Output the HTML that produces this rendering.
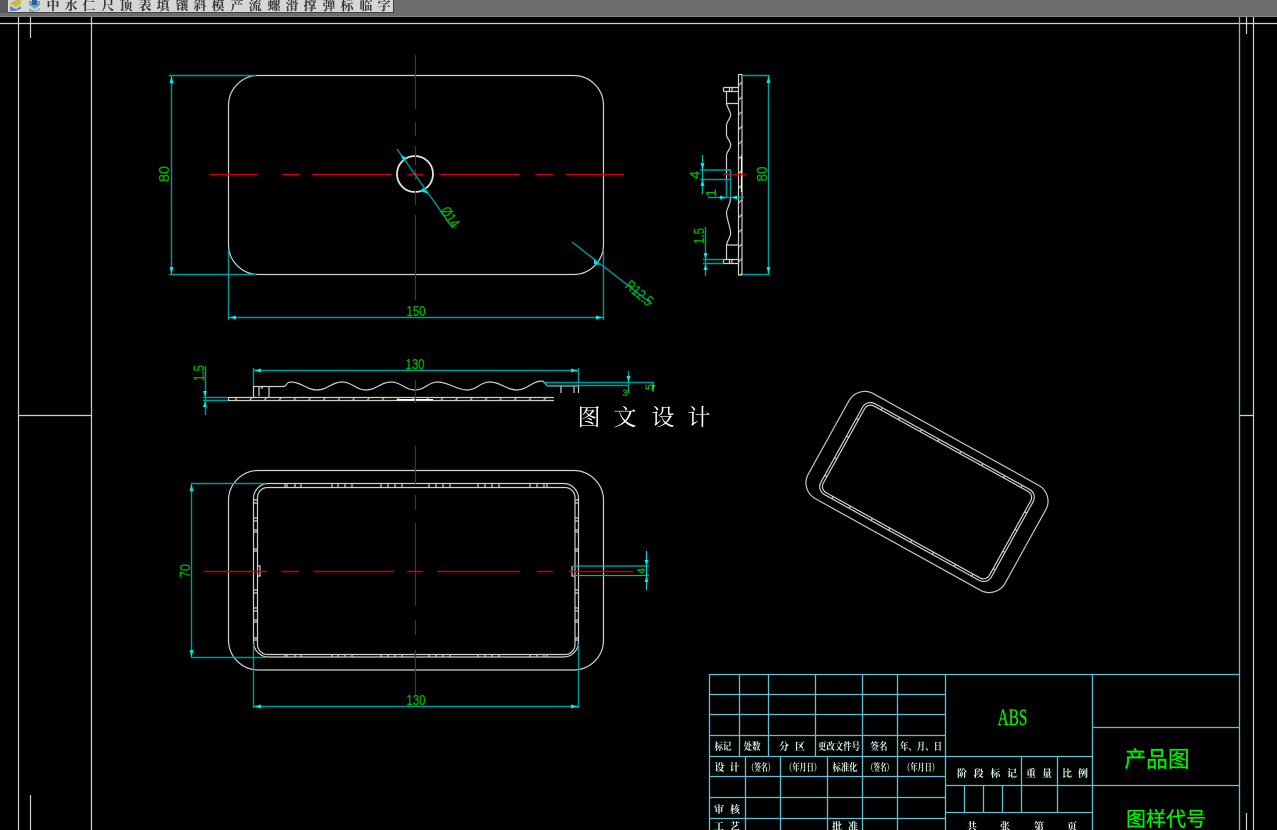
<!DOCTYPE html>
<html><head><meta charset="utf-8"><style>
html,body{margin:0;padding:0;background:#000;width:1277px;height:830px;overflow:hidden}
svg{display:block;position:absolute;left:0;top:0;filter:blur(.35px)}
.w{fill:none;stroke:#d0d0d0;stroke-width:1.2}
.d{fill:none;stroke:#009a9a;stroke-width:1.4}
.c{fill:none;stroke:#62c0d4;stroke-width:1.3}
.r{fill:none;stroke:#c80000;stroke-width:1.4}
.g{fill:#00b000;stroke:#00b000;stroke-width:.3;font-family:"Liberation Sans",sans-serif;font-size:15px;text-anchor:middle}
.t{fill:#d8f5ee;font-family:"Liberation Serif","Noto Serif CJK SC",serif;font-size:10px;font-weight:700;text-anchor:middle}
.b{fill:#00f000;stroke:#00f000;stroke-width:.3;font-family:"Liberation Sans","WenQuanYi Zen Hei",sans-serif;text-anchor:middle}
.tb{fill:#333;font-family:"Liberation Serif","Noto Serif CJK SC",serif;font-size:13px;font-weight:700;text-anchor:middle}
.a{fill:#00e8e8}
</style></head><body>
<svg width="1277" height="830" viewBox="0 0 1277 830" xmlns="http://www.w3.org/2000/svg">
<defs>
<pattern id="hh" patternUnits="userSpaceOnUse" width="14.7" height="3.4" x="233" y="396.8"><path d="M2 3.400L5 0" stroke="#d8d830" stroke-width="1.2"/></pattern>
<pattern id="hv" patternUnits="userSpaceOnUse" width="3.4" height="14.7" x="738.6" y="80"><path d="M0 5.500L3.400 2" stroke="#d8d830" stroke-width="1.2"/></pattern>
</defs>
<rect width="1277" height="830" fill="#000"/>
<!-- top bar -->
<rect x="0" y="0" width="1277" height="16" fill="#6e6e6e"/>
<rect x="0" y="16" width="1277" height="1" fill="#8a8a8a"/>
<rect x="0" y="0" width="8" height="13" fill="#5a5a5a"/>
<rect x="8" y="0" width="385" height="12" fill="#d6d6d2"/>
<rect x="393" y="0" width="1" height="13" fill="#3c3c3c"/>
<rect x="8" y="12" width="386" height="1" fill="#444"/>
<path d="M10 3L16 0H21V4L16 7L10 4Z" fill="#c9b84a"/><path d="M10 6L16 9L21 6V9L15 11H10Z" fill="#5b8fc4"/>
<path d="M29 1H40V5L35 9L29 5Z" fill="#6f9fc8"/><path d="M32 0H37V5H32Z" fill="#2a5f9a"/><path d="M29 8L35 11L40 8V10L35 12H29Z" fill="#8fa9bd"/>
<g class="tb">
<text x="53" y="10">中</text><text x="71" y="10">水</text><text x="89" y="10">仁</text><text x="108" y="10">尺</text><text x="126" y="10">顶</text><text x="145" y="10">表</text><text x="163" y="10">填</text><text x="182" y="10">镶</text><text x="200" y="10">斜</text><text x="218" y="10">模</text><text x="237" y="10">产</text><text x="255" y="10">流</text><text x="274" y="10">螺</text><text x="292" y="10">滑</text><text x="310" y="10">撑</text><text x="329" y="10">弹</text><text x="347" y="10">标</text><text x="366" y="10">临</text><text x="384" y="10">字</text>
</g>
<!-- drawing frame -->
<g class="w">
<path d="M0 23.500H1277"/>
<path d="M18.500 17V830M91.500 17V830M18.500 415.500H91.500"/>
<path d="M30.500 17V38"/>
<path d="M1253.500 17V830M1239.500 415.500H1253.500"/>
<path d="M1246.500 17V34M1246.500 813V830"/>
<path d="M30.500 795V830"/>
</g>
<path class="c" d="M1239.500 17V830"/>

<!-- top view -->
<rect class="w" x="228.500" y="75.500" width="375" height="199" rx="30" ry="30"/>
<circle class="w" cx="415" cy="174" r="18" style="stroke-width:1.800;stroke:#e4e4e4"/>
<path class="r" d="M209 174.500H258M282 174.500H300M312 174.500H392M407 174.500H423M439 174.500H520M535 174.500H553M566 174.500H624"/>
<path class="r" d="M415.500 55V109M415.500 122V136M415.500 146V165M415.500 169V180M415.500 190V205M415.500 215V300" style="stroke-width:1.100"/>
<path class="d" d="M169 75.500H256M169 274.500H256M171.500 75V275"/>
<path class="a" d="M171.500 76l-2 7h4zM171.500 274l-2 -7h4z"/>
<text class="g" transform="translate(169,174) rotate(-90)" textLength="16" lengthAdjust="spacingAndGlyphs">80</text>
<path class="d" d="M228.500 250V320M603.500 250V320M228 317.500H604"/>
<path class="a" d="M229 317.500l7 -2v4zM603 317.500l-7 -2v4z"/>
<text class="g" x="416" y="316" textLength="19" lengthAdjust="spacingAndGlyphs">150</text>
<path class="d" d="M397 149L452 227"/>
<path class="a" d="M401 155l2 6 4 -3zM429 194l-6 -6 -3 3 z"/>
<text class="g" transform="translate(446,220) rotate(55)" style="font-size:15px" textLength="22" lengthAdjust="spacingAndGlyphs">Ø14</text>
<path class="d" d="M572 242L652 304"/>
<path class="a" d="M594 259l6 6 -6 -1z"/>
<text class="g" transform="translate(636,297) rotate(40)" style="font-size:15px" textLength="31" lengthAdjust="spacingAndGlyphs">R12.5</text>

<!-- side view -->
<g>
<rect x="738.500" y="74.500" width="3.500" height="200.500" class="w"/>
<rect x="739" y="75" width="3" height="200" fill="url(#hv)"/>
<path d="M741.500 157V192" stroke="#fff" stroke-width="1.200"/>
<path class="w" d="M723.500 87.500H738M723.500 91.500H738M723.500 87.500V91.500M729.500 87.500V91.500M732 87.500V91.500"/>
<path class="w" d="M726.500 92V103.500H738M726.500 103.500C727 107 730.700 112 730.700 115C730.700 118 726.500 122 726.500 125V135C727 139 730.700 141 730.700 145C730.700 149 726.500 152 726.500 155V170H730.500V179M726.500 170V198M730.500 198C730.500 205 726.500 208 726.500 213C726.500 218 730.700 229 730.700 233C730.700 237 727 241 726.500 245V259M726.500 245H738"/>
<path class="w" d="M723.500 259.500H738M723.500 263.500H738M723.500 259.500V263.500M729.500 259.500V263.500M732 259.500V263.500"/>
<path d="M723 174.500H746" stroke="#c80000" stroke-width="1.400"/>
<path class="d" d="M742 75.500H770M742 274.500H770M768.500 76V275"/>
<path class="a" d="M768.500 76l-2 7h4zM768.500 274l-2 -7h4z"/>
<text class="g" transform="translate(767,174) rotate(-90)" textLength="15" lengthAdjust="spacingAndGlyphs">80</text>
<path class="d" d="M700 170H731M700 179.500H731M730.500 170V198M726.500 179V198M708 197.500H744"/>
<path d="M702.500 155V194" stroke="#00b8b8" stroke-width="1.200" fill="none"/>
<path class="a" d="M702.500 170l-2 -7h4zM702.500 179l-2 7h4zM726 197.500l-6 -2v4zM731 197.500l6 -2v4z"/>
<text class="g" transform="translate(700,175) rotate(-90)">4</text>
<text class="g" transform="translate(716,193) rotate(-90)">1</text>
<path class="d" d="M705.500 227V276M703 259.500H723M703 263.500H723"/>
<path class="a" d="M705.500 259l-2 -6h4zM705.500 264l-2 6h4z"/>
<text class="g" transform="translate(704,236) rotate(-90)" textLength="16" lengthAdjust="spacingAndGlyphs">1.5</text>
</g>

<!-- section view -->
<g>
<path class="w" d="M228 397.500H554M228 400.500H554M228.500 397V400"/>
<rect x="233" y="397" width="321" height="3.400" fill="url(#hh)"/>
<path d="M397 399.800H433" stroke="#fff" stroke-width="1.500"/>
<path class="w" d="M253.500 386V397M269 386V397M253 386.500H284C287 386 286 382 291 382C301 382 307 390 317 390C327 390 332 382 342 382C352 382 356 390 366 390C376 390 381 382 391 382C401 382 405 390 415 390C425 390 428 382 438 382C448 382 457 390 467 390C477 390 480 382 490 382C500 382 507 390 517 390C527 390 532 381 542 381C545 381 546 386 548 386H578M259 396V388H260M261 388H263M561 386V393M573 386H574V393M578.500 386V393"/>
<path class="r" d="M415.500 380V403" style="stroke-width:1.100"/>
<path class="d" d="M253.500 368V386M578.500 368V386M253 370.500H578"/>
<path class="a" d="M254 370.500l7 -2v4zM578 370.500l-7 -2v4z"/>
<text class="g" x="415" y="369" textLength="19" lengthAdjust="spacingAndGlyphs">130</text>
<path class="d" d="M205.500 366V415M203 397.500H228M203 400.500H228"/>
<path class="a" d="M205 397l-2 -6h4zM205 401l-2 6h4z"/>
<text class="g" transform="translate(204,373) rotate(-90)" textLength="16" lengthAdjust="spacingAndGlyphs">1.5</text>
<path class="d" d="M543 382.500H654M546 385.500H628M628.500 371V393M653 382V392"/>
<path class="a" d="M628.500 382l-2 -6h4zM653 391l-2 -6h4z"/>
<text class="g" transform="translate(653,387) rotate(-90)" style="font-size:11px">5</text>
<text class="g" x="625" y="396" style="font-size:9px">3</text>
<rect x="572" y="393" width="40" height="6" fill="#000"/>
</g>
<g fill="#fff" font-family="'Noto Serif CJK SC','Liberation Serif',serif" font-size="23" text-anchor="middle">
<text x="589" y="425">图</text><text x="625" y="425">文</text><text x="663" y="425">设</text><text x="699" y="425">计</text>
</g>

<!-- bottom view -->
<g>
<rect class="w" x="228.500" y="470.500" width="375" height="199.500" rx="30" ry="30"/>
<rect class="w" x="253.500" y="483.500" width="325" height="173.500" rx="15" ry="15"/>
<rect class="w" x="257.500" y="487.500" width="317.500" height="167" rx="10" ry="10"/>
<path class="w" d="M285 483V487M287 483V487M295 483V487M301 483V487M332 483V487M338 483V487M345 483V487M352 483V487M381 483V487M388 483V487M395 483V487M402 483V487M429 483V487M436 483V487M443 483V487M450 483V487M478 483V487M485 483V487M492 483V487M499 483V487M530 483V487M537 483V487M544 483V487M547 483V487"/>
<path class="w" d="M285 654V657M287 654V657M295 654V657M301 654V657M332 654V657M338 654V657M345 654V657M352 654V657M381 654V657M388 654V657M395 654V657M402 654V657M429 654V657M436 654V657M443 654V657M450 654V657M478 654V657M485 654V657M492 654V657M499 654V657M530 654V657M537 654V657M544 654V657M547 654V657"/>
<path class="w" d="M253 500H257M253 503H257M253 518H257M253 521H257M253 530H257M253 532H257M253 549H257M253 551H257M253 590H257M253 593H257M253 608H257M253 611H257M253 620H257M253 622H257M253 638H257M253 640H257"/>
<path class="w" d="M575 590H579M575 593H579M575 608H579M575 611H579M575 620H579M575 622H579M575 638H579M575 640H579M575 500H579M575 503H579M575 518H579M575 521H579M575 530H579M575 532H579M575 549H579M575 551H579"/>
<path class="w" d="M257 566H260V576H257M572 566V576H575"/>
<path class="r" d="M204 571.500H267M282 571.500H299M314 571.500H394M407 571.500H423M437 571.500H520M537 571.500H553M569 571.500H633"/>
<path class="r" d="M415.500 446V485M415.500 495V510M415.500 523V606M415.500 620V635M415.500 650V695" style="stroke-width:1.100"/>
<path class="d" d="M191 483.500H266M191 657.500H266M191.500 483V658"/>
<path class="a" d="M191.500 484l-2 7h4zM191.500 657l-2 -7h4z"/>
<text class="g" transform="translate(190,571) rotate(-90)" textLength="14" lengthAdjust="spacingAndGlyphs">70</text>
<path class="d" d="M253.500 644V708M578.500 644V708M253 706.500H578"/>
<path class="a" d="M254 706.500l7 -2v4zM578 706.500l-7 -2v4z"/>
<text class="g" x="416" y="705" textLength="19" lengthAdjust="spacingAndGlyphs">130</text>
<path d="M573 566H649M573 575.500H649" stroke="#00acac" stroke-width="1.200" fill="none"/>
<path d="M646.500 551V590" stroke="#00d0d0" stroke-width="1.200" fill="none"/>
<path class="a" d="M646.500 566l-2 -6h4zM646.500 576l-2 6h4z"/>
<text class="g" transform="translate(645,571) rotate(-90)" style="font-size:11px">4</text>
</g>

<!-- rotated view -->
<g transform="translate(927,492) rotate(29)">
<rect class="w" x="-112.500" y="-60" width="225" height="120" rx="18" ry="18" style="stroke:#c4c4c4"/>
<rect class="w" x="-97.500" y="-52" width="195" height="104" rx="9" ry="9"/>
<rect class="w" x="-95" y="-49.500" width="190" height="99" rx="7" ry="7"/>
<path class="w" d="M-80 -52V-49M-60 -52V-49M-35 -52V-49M-15 -52V-49M10 -52V-49M35 -52V-49M60 -52V-49M80 -52V-49M-80 52V49M-60 52V49M-35 52V49M-15 52V49M10 52V49M35 52V49M60 52V49M80 52V49M-97 -30H-95M-97 -10H-95M-97 15H-95M-97 35H-95M97 -30H95M97 -10H95M97 15H95M97 35H95"/>
</g>

<!-- title block -->
<g class="c">
<path d="M709.500 674.500H1239.500M709.500 694.500H945.500M709.500 714.500H945.500M709.500 735.500H945.500M709.500 756.500H1092.500M709.500 776.500H945.500M709.500 797.500H945.500M709.500 818.500H945.500"/>
<path d="M1092.500 727.500H1239.500M945.500 785.500H1239.500M945.500 812.500H1092.500"/>
<path d="M709.500 674V830M739.500 674V756M768.500 674V756M815.500 674V756M862.500 674V830M897.500 674V830M945.500 674V830M1092.500 674V830"/>
<path d="M745.500 756V830M780.500 756V830M827.500 756V830"/>
<path d="M964.500 785V812M983.500 785V812M1002.500 785V812M1021.500 756V812M1057.500 756V812"/>
</g>
<g class="t">
<text x="723" y="750" textLength="17" lengthAdjust="spacingAndGlyphs">标记</text><text x="752" y="750" textLength="17" lengthAdjust="spacingAndGlyphs">处数</text><text x="792" y="750" textLength="26">分　区</text><text x="839" y="750" textLength="42" lengthAdjust="spacingAndGlyphs">更改文件号</text><text x="879" y="750" textLength="17" lengthAdjust="spacingAndGlyphs">签名</text><text x="921" y="750" textLength="42" lengthAdjust="spacingAndGlyphs">年、月、日</text>
<text x="727" y="771" textLength="25">设　计</text><text x="761" y="771" textLength="27" lengthAdjust="spacingAndGlyphs">（签名）</text><text x="803" y="771" textLength="36" lengthAdjust="spacingAndGlyphs">（年月日）</text><text x="845" y="771" textLength="25" lengthAdjust="spacingAndGlyphs">标准化</text><text x="880" y="771" textLength="26" lengthAdjust="spacingAndGlyphs">（签名）</text><text x="921" y="771" textLength="36" lengthAdjust="spacingAndGlyphs">（年月日）</text>
<text x="727" y="813" textLength="26">审　核</text><text x="727" y="830" textLength="26">工　艺</text><text x="845" y="830" textLength="26">批　准</text>
<text x="987" y="777" textLength="60">阶 段 标 记</text><text x="1039" y="777" textLength="26">重　量</text><text x="1075" y="777" textLength="26">比　例</text>
<text x="972" y="830">共</text><text x="1005" y="830">张</text><text x="1039" y="830">第</text><text x="1072" y="830">页</text>
</g>
<text class="b" x="1012.500" y="725" style="font-family:'Liberation Serif',serif;font-size:23px" textLength="30" lengthAdjust="spacingAndGlyphs">ABS</text>
<text class="b" x="1157" y="767" style="font-size:22px" textLength="65" lengthAdjust="spacingAndGlyphs">产品图</text>
<text class="b" x="1166" y="826" style="font-size:20px" textLength="80" lengthAdjust="spacingAndGlyphs">图样代号</text>
</svg>
</body></html>
